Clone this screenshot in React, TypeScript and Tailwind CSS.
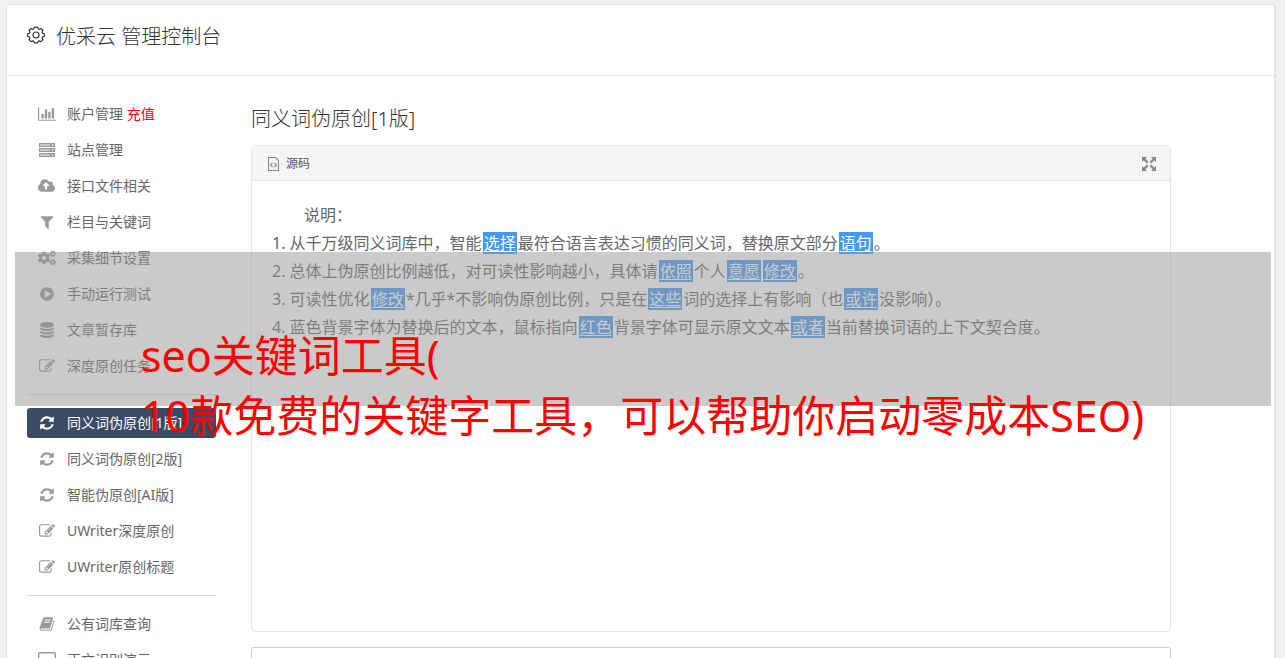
import type { ReactNode } from "react";
import { FaCogs } from "react-icons/fa";

interface GlyphProps {
  d: string;
  width?: number;
  className?: string;
}

function Glyph({ d, width = 1792, className = "h-4 w-auto" }: GlyphProps) {
  return (
    <svg viewBox={`0 0 ${width} 1792`} className={className} fill="currentColor" aria-hidden="true">
      <path d={d} />
    </svg>
  );
}

const paths = {
  chart:
    "M640 896v512h-256v-512h256zm384-512v1024h-256v-1024h256zm1024 1152v128h-2048v-1536h128v1408h1920zm-640-896v768h-256v-768h256zm384-384v1152h-256v-1152h256z",
  cloud:
    "M1280 864q0-14-9-23l-352-352q-9-9-23-9t-23 9l-351 351q-10 12-10 24 0 14 9 23t23 9h224v352q0 13 9.5 22.5t22.5 9.5h192q13 0 22.5-9.5t9.5-22.5v-352h224q13 0 22.5-9.5t9.5-22.5zm640 288q0 159-112.5 271.5t-271.5 112.5h-1088q-185 0-316.5-131.5t-131.5-316.5q0-130 70-240t188-165q-2-30-2-43 0-212 150-362t362-150q156 0 285.5 87t188.5 231q71-62 166-62 106 0 181 75t75 181q0 76-41 138 130 31 213.5 135.5t83.5 238.5z",
  filter:
    "M1595 295q17 41-14 70l-493 493v742q0 42-39 59-13 5-25 5-27 0-45-19l-256-256q-19-19-19-45v-486l-493-493q-31-29-14-70 17-39 59-39h1280q42 0 59 39z",
  play: "M896 128q209 0 385.5 103t279.5 279.5 103 385.5-103 385.5-279.5 279.5-385.5 103-385.5-103-279.5-279.5-103-385.5 103-385.5 279.5-279.5 385.5-103zm384 823q32-18 32-55t-32-55l-544-320q-31-19-64-1-32 19-32 56v640q0 37 32 56 16 8 32 8 17 0 32-9z",
  database:
    "M896 768q237 0 443-43t325-127v170q0 69-103 128t-280 93.5-385 34.5-385-34.5-280-93.5-103-128v-170q119 84 325 127t443 43zm0 768q237 0 443-43t325-127v170q0 69-103 128t-280 93.5-385 34.5-385-34.5-280-93.5-103-128v-170q119 84 325 127t443 43zm0-384q237 0 443-43t325-127v170q0 69-103 128t-280 93.5-385 34.5-385-34.5-280-93.5-103-128v-170q119 84 325 127t443 43zm0-1152q208 0 385 34.5t280 93.5 103 128v128q0 69-103 128t-280 93.5-385 34.5-385-34.5-280-93.5-103-128v-128q0-69 103-128t280-93.5 385-34.5z",
  edit: "M888 1184l116-116-152-152-116 116v56h96v96h56zm440-720q-16-16-33 1l-350 350q-17 17-1 33t33-1l350-350q17-17 1-33zm80 594v190q0 119-84.5 203.5t-203.5 84.5h-832q-119 0-203.5-84.5t-84.5-203.5v-832q0-119 84.5-203.5t203.5-84.5h832q63 0 117 25 15 7 18 23 3 17-9 29l-49 49q-14 14-32 8-23-6-45-6h-832q-66 0-113 47t-47 113v832q0 66 47 113t113 47h832q66 0 113-47t47-113v-126q0-13 9-22l64-64q15-15 35-7t20 29zm-96-738l288 288-672 672h-288v-288zm444 132l-92 92-288-288 92-92q28-28 68-28t68 28l152 152q28 28 28 68t-28 68z",
  refresh:
    "M1639 1056q0 5-1 7-64 268-268 434.5t-478 166.5q-146 0-282.5-55t-243.5-157l-129 129q-19 19-45 19t-45-19-19-45v-448q0-26 19-45t45-19h448q26 0 45 19t19 45-19 45l-137 137q71 66 161 102t187 36q134 0 250-65t186-179q11-17 53-117 8-23 30-23h192q13 0 22.5 9.5t9.5 22.5zm25-800v448q0 26-19 45t-45 19h-448q-26 0-45-19t-19-45 19-45l138-138q-148-137-349-137-134 0-250 65t-186 179q-11 17-53 117-8 23-30 23h-199q-13 0-22.5-9.5t-9.5-22.5v-7q65-268 270-434.5t480-166.5q146 0 284 55.5t245 156.5l130-129q19-19 45-19t45 19 19 45z",
  book: "M1703 478q40 57 18 129l-275 906q-19 64-76.5 107.5t-122.5 43.5h-923q-77 0-148.5-53.5t-99.5-131.5q-24-67-2-127 0-4 3-27t4-37q1-8-3-21.5t-3-19.5q2-11 8-21t16.5-23.5 16.5-23.5q23-38 45-91.5t30-91.5q3-10 .5-30t-.5-28q3-11 17-28t17-23q21-36 42-92t25-90q1-9-2.500-32t.5-28q4-13 22-30.5t22-22.5q19-26 42.5-84.5t27.5-96.5q1-8-3-25.5t-2-26.5q2-8 9-18t18-23 17-21q8-12 16.5-30.5t15-35 16-36 19.5-32 26.5-23.5 36-11.5 47.5 5.5l-1 3q38-9 51-9h761q74 0 114 56t18 130l-274 906q-36 119-71.5 153.5t-128.5 34.5h-869q-27 0-38 15-11 16-1 43 24 70 144 70h923q29 0 56-15.5t35-41.5l300-987q7-22 5-57 38 15 59 43zm-1064 2q-4 13 2 22.5t20 9.5h608q13 0 25.5-9.5t16.5-22.5l21-64q4-13-2-22.5t-20-9.5h-608q-13 0-25.5 9.5t-16.5 22.5zm-83 256q-4 13 2 22.5t20 9.5h608q13 0 25.5-9.5t16.5-22.5l21-64q4-13-2-22.5t-20-9.5h-608q-13 0-25.5 9.5t-16.5 22.5z",
};

function ServerIcon() {
  return (
    <svg viewBox="0 0 16 14" className="h-3.5 w-4" aria-hidden="true">
      {[0, 5, 10].map((y) => (
        <g key={y}>
          <rect x="0" y={y} width="16" height="4" fill="#999" />
          <rect x="1" y={y + 1.4} width="10" height="1.2" fill="#e6e6e6" />
          <rect x="13" y={y + 1.4} width="1.4" height="1.2" fill="#fff" />
        </g>
      ))}
    </svg>
  );
}

function DesktopIcon() {
  return (
    <svg viewBox="0 0 18 16" className="h-4 w-[18px]" fill="none" stroke="currentColor" aria-hidden="true">
      <rect x="0.7" y="0.7" width="16.6" height="11" rx="1" strokeWidth="1.4" />
      <path d="M5 15h8M9 12v3" strokeWidth="1.4" />
    </svg>
  );
}

function GearIcon() {
  return (
    <svg viewBox="0 0 18 18" className="size-[18px]" fill="none" stroke="currentColor" strokeWidth="1.2" strokeLinejoin="round" aria-hidden="true">
      <path d="M7.4 1.1h3.2l.6 1.8 1 .4 1.7-.8 2 2-.8 1.7.4 1 1.8.6v2.6l-1.8.6-.4 1 .8 1.7-2 2-1.7-.8-1 .4-.6 1.6H7.4l-.6-1.6-1-.4-1.7.8-2-2 .8-1.7-.4-1-1.800-.6V7.8l1.8-.6.4-1-.8-1.700 2-2 1.700.8 1-.4z" />
      <circle cx="9" cy="9" r="3" />
    </svg>
  );
}

function SourceIcon() {
  return (
    <svg viewBox="0 0 11 14" className="h-3.5 w-[11px]" fill="none" stroke="#888" aria-hidden="true">
      <path d="M.5 .5h7l3 3v10H.5z" strokeWidth="1.2" />
      <path d="M4.6 5.8L2.6 7.9l2 2.1M6.4 5.8l2 2.1-2 2.1" strokeWidth="1.2" />
    </svg>
  );
}

function ExpandIcon() {
  return (
    <svg viewBox="0 0 14 14" className="size-3.5" fill="#888" stroke="#888" aria-hidden="true">
      <path stroke="none" d="M0 0h5L0 5zM14 0v5L9 0zM0 14V9l5 5zM14 14H9l5-5z" />
      <path strokeWidth="2.2" d="M2 2l3.6 3.6M12 2L8.4 5.6M2 12l3.6-3.6M12 12L8.4 8.4" />
    </svg>
  );
}

interface NavItem {
  label: string;
  icon: ReactNode;
  extra?: string;
  active?: boolean;
}

const edit = <Glyph d={paths.edit} />;
const refresh = <Glyph d={paths.refresh} />;

const groups: NavItem[][] = [
  [
    { label: "账户管理", icon: <Glyph d={paths.chart} width={2048} />, extra: "充值" },
    { label: "站点管理", icon: <ServerIcon /> },
    { label: "接口文件相关", icon: <Glyph d={paths.cloud} width={1920} /> },
    { label: "栏目与关键词", icon: <Glyph d={paths.filter} /> },
    { label: "采集细节设置", icon: <FaCogs className="size-[18px]" /> },
    { label: "手动运行测试", icon: <Glyph d={paths.play} /> },
    { label: "文章暂存库", icon: <Glyph d={paths.database} /> },
    { label: "深度原创任务", icon: edit },
  ],
  [
    { label: "同义词伪原创[1版]", icon: refresh, active: true },
    { label: "同义词伪原创[2版]", icon: refresh },
    { label: "智能伪原创[AI版]", icon: refresh },
    { label: "UWriter深度原创", icon: edit },
    { label: "UWriter原创标题", icon: edit },
  ],
  [
    { label: "公有词库查询", icon: <Glyph d={paths.book} /> },
    { label: "正文识别演示", icon: <DesktopIcon /> },
  ],
];

function NavLink({ label, icon, extra, active }: NavItem) {
  return (
    <a
      href="#"
      aria-current={active ? "page" : undefined}
      className={
        active
          ? "flex h-[30px] items-center gap-2.5 rounded-[3px] bg-[#3a4b66] pl-2.5 text-sm text-white"
          : "flex h-[30px] items-center gap-2.5 pl-2.5 text-sm text-[#666]"
      }
    >
      <span className={active ? "flex w-5 justify-center text-white" : "flex w-5 justify-center text-[#999]"}>
        {icon}
      </span>
      <span className="whitespace-nowrap">
        {label}
        {extra && <span className="text-[#ff0000]"> {extra}</span>}
      </span>
    </a>
  );
}

function Mark({ children }: { children: ReactNode }) {
  return <u className="mx-px bg-[#4499f3] px-px text-white underline-offset-2">{children}</u>;
}

export default function App() {
  return (
    <div className="relative h-screen overflow-hidden bg-[#f1f1f1] pt-1 pr-[9px] pl-1.5 font-['Noto_Sans','Noto_Sans_CJK_SC',sans-serif] text-[#666]">
      <div className="rounded border border-r-2 border-[#e5e5e5] bg-white">
        <header className="flex h-[71px] items-start gap-[11px] border-b border-[#e5e5e5] px-5 pt-[18px] text-[#333]">
          <span className="pt-[3px]">
            <GearIcon />
          </span>
          <h1 className="text-xl leading-7 font-light">优采云 管理控制台</h1>
        </header>

        <div className="flex items-start pt-[23px] pl-5">
          <nav className="flex w-[189px] shrink-0 flex-col">
            {groups.map((items, i) => (
              <div
                key={i}
                className={i > 0 ? "mt-[13px] flex flex-col gap-1.5 border-t border-[#ddd] pt-[13px]" : "flex flex-col gap-1.5"}
              >
                {items.map((item) => (
                  <NavLink key={item.label} {...item} />
                ))}
              </div>
            ))}
          </nav>

          <main className="mr-[103px] ml-[35px] min-w-0 flex-1 pt-1.5">
            <h2 className="text-xl leading-7 font-light text-[#333]">同义词伪原创[1版]</h2>

            <section className="mt-3 rounded border border-[#e5e5e5]">
              <div className="flex h-[35px] items-center justify-between border-b border-[#e5e5e5] bg-[#f5f5f5] pt-0.5 pr-3.5 pl-4">
                <button type="button" className="flex items-center gap-[7px] text-xs text-[#555]">
                  <SourceIcon />
                  源码
                </button>
                <button type="button" aria-label="全屏">
                  <ExpandIcon />
                </button>
              </div>
              <div className="min-h-[450px] px-5 pt-5 text-base leading-7">
                <p className="pl-8">说明：</p>
                <ol className="list-inside list-decimal">
                  <li>
                    从千万级同义词库中，智能<Mark>选择</Mark>最符合语言表达习惯的同义词，替换原文部分<Mark>语句</Mark>。
                  </li>
                  <li>
                    总体上伪原创比例越低，对可读性影响越小，具体请<Mark>依照</Mark>个人<Mark>意愿</Mark>
                    <Mark>修改</Mark>。
                  </li>
                  <li>
                    可读性优化<Mark>修改</Mark>*几乎*不影响伪原创比例，只是在<Mark>这些</Mark>词的选择上有影响（也
                    <Mark>或许</Mark>没影响）。
                  </li>
                  <li>
                    蓝色背景字体为替换后的文本，鼠标指向<Mark>红色</Mark>背景字体可显示原文文本<Mark>或者</Mark>
                    当前替换词语的上下文契合度。
                  </li>
                </ol>
              </div>
            </section>

            <textarea aria-label="内容" className="mt-[15px] block h-40 w-full resize-none rounded-[3px] border border-[#ccc]" />
          </main>
        </div>
      </div>

      {/* caption banner laid over the console */}
      <div className="absolute top-[252px] right-3.5 left-[15px] h-[154px] bg-[#969696]/50" />
      <p className="absolute top-[326px] left-[141px] text-[43px] leading-[60px] whitespace-nowrap text-[#ff0000]">
        seo关键词工具(
        <br />
        10款免费的关键字工具，可以帮助你启动零成本SEO)
      </p>
    </div>
  );
}
